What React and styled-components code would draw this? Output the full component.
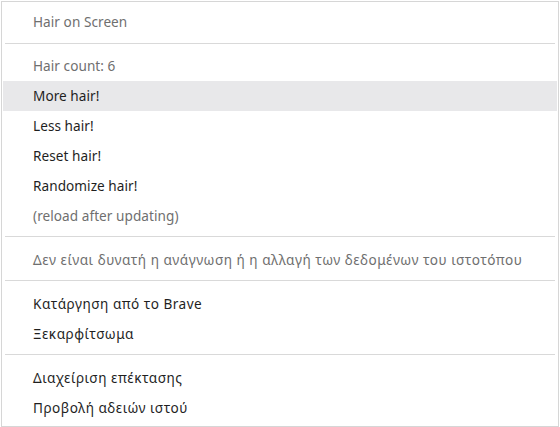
import React from "react";
import styled, { createGlobalStyle } from "styled-components";

const GlobalStyle = createGlobalStyle`
  html, body {
    margin: 0;
    padding: 0;
    background: #ffffff;
  }
  body {
    font-family: "Segoe UI", "Noto Sans", "Open Sans", sans-serif;
  }
`;

const Menu = styled.div`
  box-sizing: border-box;
  width: 558px;
  height: 426px;
  margin: 1px 0 0 1px;
  padding: 5px 1px 4px;
  background: #ffffff;
  border: 1px solid #d6d6d6;
  display: flex;
  flex-direction: column;
`;

const Item = styled.div`
  height: 30px;
  display: flex;
  align-items: center;
  padding-left: 30px;
  font-size: 13.6px;
  letter-spacing: ${(p) => (p.$greek ? "0.5px" : "0.05px")};
  color: ${(p) => (p.$disabled ? "#6f6f6f" : "#1f1f1f")};
  background: ${(p) => (p.$active ? "#e8e8ea" : "transparent")};
  white-space: nowrap;
`;

const Separator = styled.div`
  height: 1px;
  margin: 6px 2px 7px;
  background: #d9d9d9;
`;

const groups = [
  [{ label: "Hair on Screen", disabled: true }],
  [
    { label: "Hair count: 6", disabled: true },
    { label: "More hair!", active: true },
    { label: "Less hair!" },
    { label: "Reset hair!" },
    { label: "Randomize hair!" },
    { label: "(reload after updating)", disabled: true },
  ],
  [
    {
      label:
        "Δεν είναι δυνατή η ανάγνωση ή η αλλαγή των δεδομένων του ιστοτόπου",
      disabled: true,
      greek: true,
    },
  ],
  [
    { label: "Κατάργηση από το Brave", greek: true },
    { label: "Ξεκαρφίτσωμα", greek: true },
  ],
  [
    { label: "Διαχείριση επέκτασης", greek: true },
    { label: "Προβολή αδειών ιστού", greek: true },
  ],
];

export default function App() {
  return (
    <>
      <GlobalStyle />
      <Menu>
        {groups.map((group, gi) => (
          <React.Fragment key={gi}>
            {gi > 0 && <Separator />}
            {group.map((item) => (
              <Item
                key={item.label}
                $disabled={item.disabled}
                $active={item.active}
                $greek={item.greek}
              >
                {item.label}
              </Item>
            ))}
          </React.Fragment>
        ))}
      </Menu>
    </>
  );
}
